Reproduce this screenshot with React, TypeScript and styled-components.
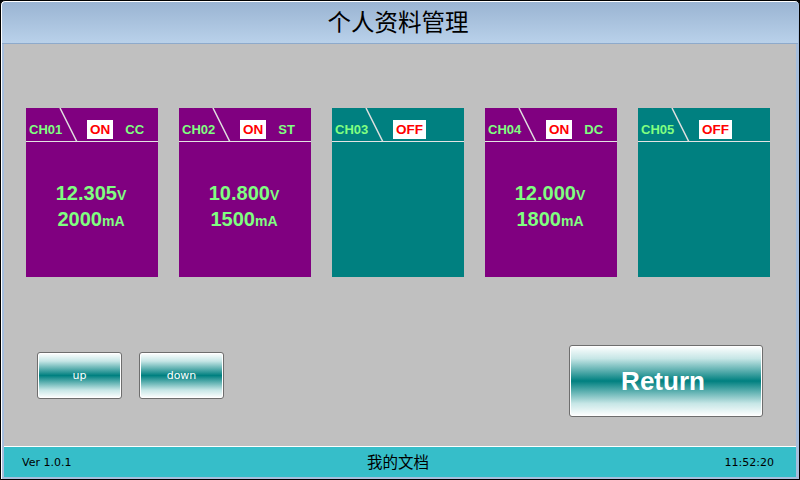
import styled, { createGlobalStyle } from "styled-components";

const GlobalStyle = createGlobalStyle`
  html, body {
    margin: 0;
    padding: 0;
    background: #000;
  }
  * {
    box-sizing: border-box;
  }
`;

const colors = {
  purple: "#800080",
  teal: "#008080",
  green: "#80ff80",
  gray: "#c0c0c0",
  footer: "#36bec9",
  frame: "#a6bedc",
};

const Frame = styled.div`
  width: 800px;
  height: 480px;
  display: flex;
  flex-direction: column;
  border: 1px solid #000;
  border-radius: 5px 5px 0 0;
  background: ${colors.frame};
  box-shadow: inset 1px 1px 0 #fff;
  overflow: hidden;
  font-family: "Liberation Sans", Arial, "Noto Sans CJK SC", sans-serif;
`;

const TitleBar = styled.header`
  height: 42px;
  flex-shrink: 0;
  display: flex;
  align-items: center;
  justify-content: center;
  margin: 1px 1px 0 1px;
  border-radius: 4px 4px 0 0;
  background: linear-gradient(#9ab4d2, #b9d1ea);
  border-bottom: 1px solid #8eaacb;
  font-family: "Noto Sans CJK SC", "DejaVu Sans", sans-serif;
  font-size: 23.5px;
  color: #000;
  padding: 0 4px 3px 0;
`;

const Main = styled.div`
  flex: 1;
  display: flex;
  flex-direction: column;
  padding: 0 3px 2px 3px;
`;

const Body = styled.main`
  flex: 1;
  background: ${colors.gray};
  display: flex;
  flex-direction: column;
`;

const CardRow = styled.div`
  display: flex;
  gap: 21px;
  margin-top: 64px;
  padding-left: 22px;
`;

const Card = styled.div<{ $on: boolean }>`
  width: 132px;
  height: 169px;
  display: flex;
  flex-direction: column;
  background: ${(p) => (p.$on ? colors.purple : colors.teal)};
`;

const CardHead = styled.div`
  position: relative;
  height: 34px;
  display: flex;
  align-items: flex-end;
  padding: 0 0 4px 3px;
  border-bottom: 1px solid #e4e4e4;
  font-size: 13px;
  font-weight: bold;
  color: ${colors.green};
`;

const Slash = styled.svg`
  position: absolute;
  left: 33px;
  top: 0;
`;

const Channel = styled.span`
  width: 58px;
  line-height: 14px;
`;

const Badge = styled.span`
  min-width: 24px;
  height: 19px;
  padding: 0 3px;
  margin-bottom: -2px;
  display: flex;
  align-items: center;
  justify-content: center;
  background: #fff;
  color: #ff0000;
  font-size: 13.5px;
`;

const Mode = styled.span`
  margin-left: 12px;
  line-height: 14px;
`;

const Readings = styled.div`
  flex: 1;
  display: flex;
  flex-direction: column;
  align-items: center;
  padding: 39px 2px 0 0;
  color: ${colors.green};
  font-weight: bold;
`;

const Value = styled.div`
  font-size: 20px;
  line-height: 24px;
`;

const Unit = styled.span`
  font-size: 14px;
`;

const ButtonRow = styled.div`
  display: flex;
  align-items: flex-start;
  margin-top: 68px;
  padding: 0 33px 0 33px;
`;

const SmallGroup = styled.div`
  display: flex;
  gap: 17px;
  padding-top: 7px;
  flex: 1;
`;

const GlossButton = styled.button<{ $big?: boolean }>`
  width: ${(p) => (p.$big ? "194px" : "85px")};
  height: ${(p) => (p.$big ? "72px" : "47px")};
  border: 1px solid #6e6e6e;
  border-radius: 3px;
  box-shadow: inset 0 0 0 1px #fff;
  background: linear-gradient(
    #ffffff 0%,
    #c6e6e6 18%,
    #008080 50%,
    #c6e6e6 82%,
    #ffffff 100%
  );
  color: #fff;
  font-family: ${(p) =>
    p.$big ? '"Liberation Sans", Arial, sans-serif' : '"DejaVu Sans", sans-serif'};
  font-size: ${(p) => (p.$big ? "26px" : "11px")};
  font-weight: ${(p) => (p.$big ? "bold" : "normal")};
  padding: ${(p) => (p.$big ? "0 6px 0 0" : "0")};
  cursor: pointer;
`;

const Footer = styled.footer`
  height: 31px;
  flex-shrink: 0;
  display: grid;
  grid-template-columns: 1fr auto 1fr;
  align-items: center;
  padding: 0 22px 0 18px;
  border-top: 1px solid #fff;
  background: ${colors.footer};
  color: #000;
`;

const Version = styled.span`
  font-family: "DejaVu Sans", sans-serif;
  font-size: 11px;
`;

const FooterTitle = styled.span`
  font-family: "Noto Sans CJK SC", sans-serif;
  font-size: 15.5px;
  padding-bottom: 2px;
`;

const Clock = styled.span`
  justify-self: end;
  font-family: "DejaVu Sans", sans-serif;
  font-size: 11px;
`;

type Channel = {
  id: string;
  on: boolean;
  mode?: string;
  volts?: string;
  amps?: string;
};

const channels: Channel[] = [
  { id: "CH01", on: true, mode: "CC", volts: "12.305", amps: "2000" },
  { id: "CH02", on: true, mode: "ST", volts: "10.800", amps: "1500" },
  { id: "CH03", on: false },
  { id: "CH04", on: true, mode: "DC", volts: "12.000", amps: "1800" },
  { id: "CH05", on: false },
];

const ChannelCard = ({ ch }: { ch: Channel }) => (
  <Card $on={ch.on}>
    <CardHead>
      <Slash width="20" height="34" viewBox="0 0 20 34">
        <line x1="1" y1="0" x2="18" y2="34" stroke="#e0e0e0" strokeWidth="1.5" />
      </Slash>
      <Channel>{ch.id}</Channel>
      <Badge>{ch.on ? "ON" : "OFF"}</Badge>
      {ch.mode && <Mode>{ch.mode}</Mode>}
    </CardHead>
    {ch.on && (
      <Readings>
        <Value>
          {ch.volts}
          <Unit>V</Unit>
        </Value>
        <Value>
          {ch.amps}
          <Unit>mA</Unit>
        </Value>
      </Readings>
    )}
  </Card>
);

export default function App() {
  return (
    <>
      <GlobalStyle />
      <Frame>
        <TitleBar>个人资料管理</TitleBar>
        <Main>
          <Body>
            <CardRow>
              {channels.map((ch) => (
                <ChannelCard key={ch.id} ch={ch} />
              ))}
            </CardRow>
            <ButtonRow>
              <SmallGroup>
                <GlossButton>up</GlossButton>
                <GlossButton>down</GlossButton>
              </SmallGroup>
              <GlossButton $big>Return</GlossButton>
            </ButtonRow>
          </Body>
          <Footer>
            <Version>Ver 1.0.1</Version>
            <FooterTitle>我的文档</FooterTitle>
            <Clock>11:52:20</Clock>
          </Footer>
        </Main>
      </Frame>
    </>
  );
}
